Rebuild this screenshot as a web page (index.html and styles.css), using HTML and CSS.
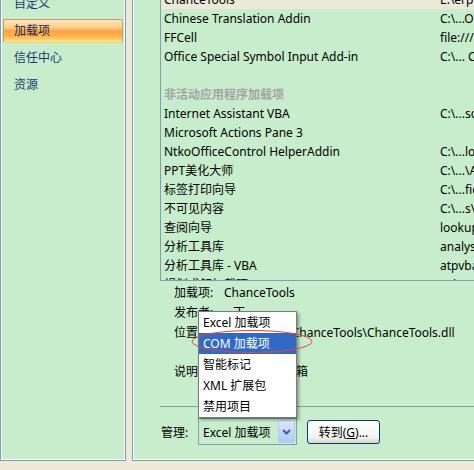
FILE: index.html
```html
<!DOCTYPE html>
<html lang="zh-CN">
<head>
<meta charset="utf-8">
<title>加载项</title>
<link rel="stylesheet" href="styles.css">
</head>
<body>
<div class="dialog">
  <nav class="side">
    <ul class="nav">
      <li class="nav-item">自定义</li>
      <li class="nav-item active">加载项</li>
      <li class="nav-item">信任中心</li>
      <li class="nav-item">资源</li>
    </ul>
  </nav>
  <main class="content">
    <div class="list">
      <div class="row sel"><span class="c1">ChanceTools</span><span class="c2">E:\erp\plug\ChanceTools\ChanceTools.dll</span></div>
      <div class="row"><span class="c1">Chinese Translation Addin</span><span class="c2">C:\...Office12\TCSCCONV.DLL</span></div>
      <div class="row"><span class="c1">FFCell</span><span class="c2">file:///C:/Program Files/FFCell/</span></div>
      <div class="row"><span class="c1">Office Special Symbol Input Add-in</span><span class="c2">C:\... Common Files\Symbol.dll</span></div>
      <div class="row"><span class="c1"></span><span class="c2"></span></div>
      <div class="row group"><span class="c1">非活动应用程序加载项</span><span class="c2"></span></div>
      <div class="row"><span class="c1">Internet Assistant VBA</span><span class="c2">C:\...school\HTML.XLAM</span></div>
      <div class="row"><span class="c1">Microsoft Actions Pane 3</span><span class="c2"></span></div>
      <div class="row"><span class="c1">NtkoOfficeControl HelperAddin</span><span class="c2">C:\...local\NtkoHelper.dll</span></div>
      <div class="row"><span class="c1">PPT美化大师</span><span class="c2">C:\...\AppData\Meihua.dll</span></div>
      <div class="row"><span class="c1">标签打印向导</span><span class="c2">C:\...fice12\Label.xla</span></div>
      <div class="row"><span class="c1">不可见内容</span><span class="c2">C:\...s\OFFRHD.DLL</span></div>
      <div class="row"><span class="c1">查阅向导</span><span class="c2">lookup.xlam</span></div>
      <div class="row"><span class="c1">分析工具库</span><span class="c2">analys32.xll</span></div>
      <div class="row"><span class="c1">分析工具库 - VBA</span><span class="c2">atpvbaen.xlam</span></div>
      <div class="row"><span class="c1">规划求解加载项</span><span class="c2">solver.xlam</span></div>
    </div>

    <div class="details">
      <div class="drow"><span class="dl">加载项:</span><span class="dv">ChanceTools</span></div>
      <div class="drow"><span class="dl">发布者:</span><span class="dv pub">丁</span></div>
      <div class="drow"><span class="dl">位置:</span><span class="dv">E:\erp\plug\ChanceTools\ChanceTools.dll</span></div>
      <div class="drow note"><span class="dl">说明:</span><span class="dv">畅想软件工具箱</span></div>
    </div>

    <div class="sep"></div>

    <div class="manage">
      <span class="mlabel">管理:</span>
      <div class="select">
        <span class="sel-text">Excel 加载项</span>
        <span class="sel-btn">
          <svg width="9" height="6" viewBox="0 0 9 6"><polyline points="1,1 4.5,4.5 8,1" fill="none" stroke="#4a5f86" stroke-width="2"/></svg>
        </span>
        <ul class="dropdown">
          <li class="opt">Excel 加载项</li>
          <li class="opt hi">COM 加载项</li>
          <li class="opt">智能标记</li>
          <li class="opt">XML 扩展包</li>
          <li class="opt">禁用项目</li>
        </ul>
      </div>
      <button class="go" type="button">转到(<u>G</u>)...</button>
    </div>
  </main>
</div>
<svg class="annot" width="124" height="26" viewBox="0 0 124 26"><ellipse cx="62" cy="12.5" rx="60" ry="11" fill="none" stroke="#e2443f" stroke-width="1"/></svg>
</body>
</html>
```
FILE: styles.css
```css
* { box-sizing: border-box; }
html, body { margin: 0; padding: 0; }
body {
  width: 474px;
  height: 470px;
  overflow: hidden;
  position: relative;
  background: #ECE9D8;
  font-family: "Noto Sans", "Noto Sans CJK SC", sans-serif;
  font-size: 12px;
  color: #000;
}
.dialog {
  display: flex;
  gap: 6px;
  height: 461px;
}
.side {
  flex: 0 0 126px;
  height: 461px;
  background: #C7EDCC;
  border: 1px solid #7F9DB9;
  border-top: 0;
  box-shadow: inset 1px 0 0 #fff, inset -1px 0 0 #fff, inset 0 -1px 0 #fff;
  overflow: hidden;
}
.nav {
  list-style: none;
  margin: -8px 0 0;
  padding: 0 2px;
  display: flex;
  flex-direction: column;
  gap: 3px;
}
.nav-item {
  height: 24px;
  line-height: 22px;
  padding-left: 10px;
  color: #1c3a70;
  border: 1px solid transparent;
  border-radius: 2px;
}
.nav-item.active {
  color: #1a2a50;
  border-color: #c0a064 #c8a868 #f2d46c #c0a064;
  background: linear-gradient(#fde4bd 0%, #fccb8c 35%, #f9a53c 50%, #fab14e 72%, #ffe48a 100%);
}
.content {
  flex: 0 0 400px;
  height: 461px;
  background: #C7EDCC;
  border-left: 1px solid #7F9DB9;
  border-bottom: 1px solid #7F9DB9;
  box-shadow: inset 1px 0 0 #fff, inset 0 -1px 0 #fff;
  overflow: hidden;
  display: flex;
  flex-direction: column;
}
.list {
  flex: none;
  margin: -11px 0 0 27px;
  width: 400px;
  height: 292px;
  border: 1px solid #7F9DB9;
  overflow: hidden;
}
.row {
  display: grid;
  grid-template-columns: 276px 1fr;
  height: 19px;
  line-height: 19px;
  padding-left: 3px;
  white-space: nowrap;
}
.row span { overflow: hidden; }
.row.sel { background: #ECE9D8; }
.row.group { color: #a4a4a4; font-weight: bold; }
.details {
  flex: none;
  margin: 2px 0 0 41px;
}
.drow {
  display: grid;
  grid-template-columns: 50px auto;
  height: 20px;
  line-height: 20px;
  white-space: nowrap;
}
.dv.pub { padding-left: 9px; }
.drow.note { margin-top: 19px; }
.sep {
  flex: none;
  margin: 24px 0 0 27px;
  height: 1px;
  background: #7F9DB9;
}
.manage {
  flex: none;
  margin: 11px 0 0 28px;
  display: flex;
  align-items: center;
  height: 27px;
}
.mlabel { flex: 0 0 37px; }
.select {
  position: relative;
  flex: 0 0 99px;
  height: 27px;
  border: 1px solid #7F9DB9;
  display: flex;
  align-items: center;
  padding-left: 4px;
}
.sel-text { flex: 1; white-space: nowrap; }
.sel-btn {
  flex: 0 0 17px;
  height: 23px;
  margin-right: 1px;
  border: 1px solid #b9cbf3;
  border-radius: 2px;
  background: linear-gradient(#dde7fc, #c1d3fb 60%, #b3c8f8);
  display: flex;
  align-items: center;
  justify-content: center;
}
.dropdown {
  position: absolute;
  left: -1px;
  bottom: calc(100% + 1px);
  width: 99px;
  margin: 0;
  padding: 0;
  list-style: none;
  background: #fff;
  border: 1px solid #7a7a7a;
  box-shadow: 2px 2px 3px rgba(0, 0, 0, 0.35);
}
.opt {
  height: 21px;
  line-height: 21px;
  padding-left: 4px;
  white-space: nowrap;
}
.opt.hi { background: #316AC5; color: #fff; }
.go {
  margin-left: 10px;
  width: 73px;
  height: 24px;
  padding: 0;
  font: inherit;
  color: #000;
  border: 1px solid #003C74;
  border-radius: 3px;
  background: linear-gradient(#ffffff, #f3f3ef 75%, #d8d3c8);
}
.annot {
  position: absolute;
  left: 190px;
  top: 329px;
}
```
